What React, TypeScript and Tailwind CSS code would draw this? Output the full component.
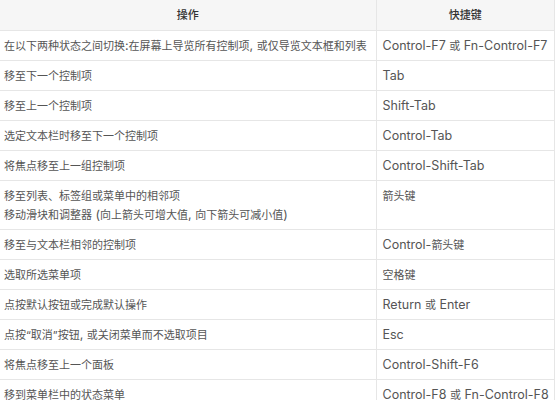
const rows: [string[], string][] = [
  [["在以下两种状态之间切换:在屏幕上导览所有控制项, 或仅导览文本框和列表"], "Control-F7 或 Fn-Control-F7"],
  [["移至下一个控制项"], "Tab"],
  [["移至上一个控制项"], "Shift-Tab"],
  [["选定文本栏时移至下一个控制项"], "Control-Tab"],
  [["将焦点移至上一组控制项"], "Control-Shift-Tab"],
  [["移至列表、标签组或菜单中的相邻项", "移动滑块和调整器 (向上箭头可增大值, 向下箭头可减小值)"], "箭头键"],
  [["移至与文本栏相邻的控制项"], "Control-箭头键"],
  [["选取所选菜单项"], "空格键"],
  [["点按默认按钮或完成默认操作"], "Return 或 Enter"],
  [["点按“取消”按钮, 或关闭菜单而不选取项目"], "Esc"],
  [["将焦点移至上一个面板"], "Control-Shift-F6"],
  [["移到菜单栏中的状态菜单"], "Control-F8 或 Fn-Control-F8"],
];

// CJK runs are set a touch smaller than the latin text, as in the reference
const Mixed = ({ text }: { text: string }) => (
  <div className="h-[19px] leading-[19px]">
    {text.split(/([\u3000-\u9fff\uff00-\uffef“”、]+)/).map((part, i) =>
      i % 2 === 1 ? (
        <span key={i} className="text-[11px]">{part}</span>
      ) : (
        <span key={i}>{part}</span>
      )
    )}
  </div>
);

export default function App() {
  return (
    <div className="w-[555px] h-[400px] overflow-hidden bg-white font-['Inter','Noto_Sans_CJK_SC',sans-serif] text-[12.5px] text-[#555]">
      <table className="w-[555px] border-collapse table-fixed">
        <colgroup>
          <col className="w-[376px]" />
          <col />
        </colgroup>
        <thead>
          <tr className="bg-[#f6f6f6] h-[30px]">
            <th className="border-b border-r border-[#e6e6e6] font-medium text-[#333] text-[11px] text-center">操作</th>
            <th className="border-b border-r border-[#e6e6e6] font-medium text-[#333] text-[11px] text-center">快捷键</th>
          </tr>
        </thead>
        <tbody>
          {rows.map(([actions, key], i) => (
            <tr key={i}>
              <td className="border-b border-r border-[#e6e6e6] align-top pl-[4px] py-[5px] whitespace-nowrap">
                {actions.map((a, j) => (
                  <Mixed key={j} text={a} />
                ))}
              </td>
              <td className="border-b border-r border-[#e6e6e6] align-top pl-[6px] py-[5px] whitespace-nowrap">
                <Mixed text={key} />
              </td>
            </tr>
          ))}
        </tbody>
      </table>
    </div>
  );
}
